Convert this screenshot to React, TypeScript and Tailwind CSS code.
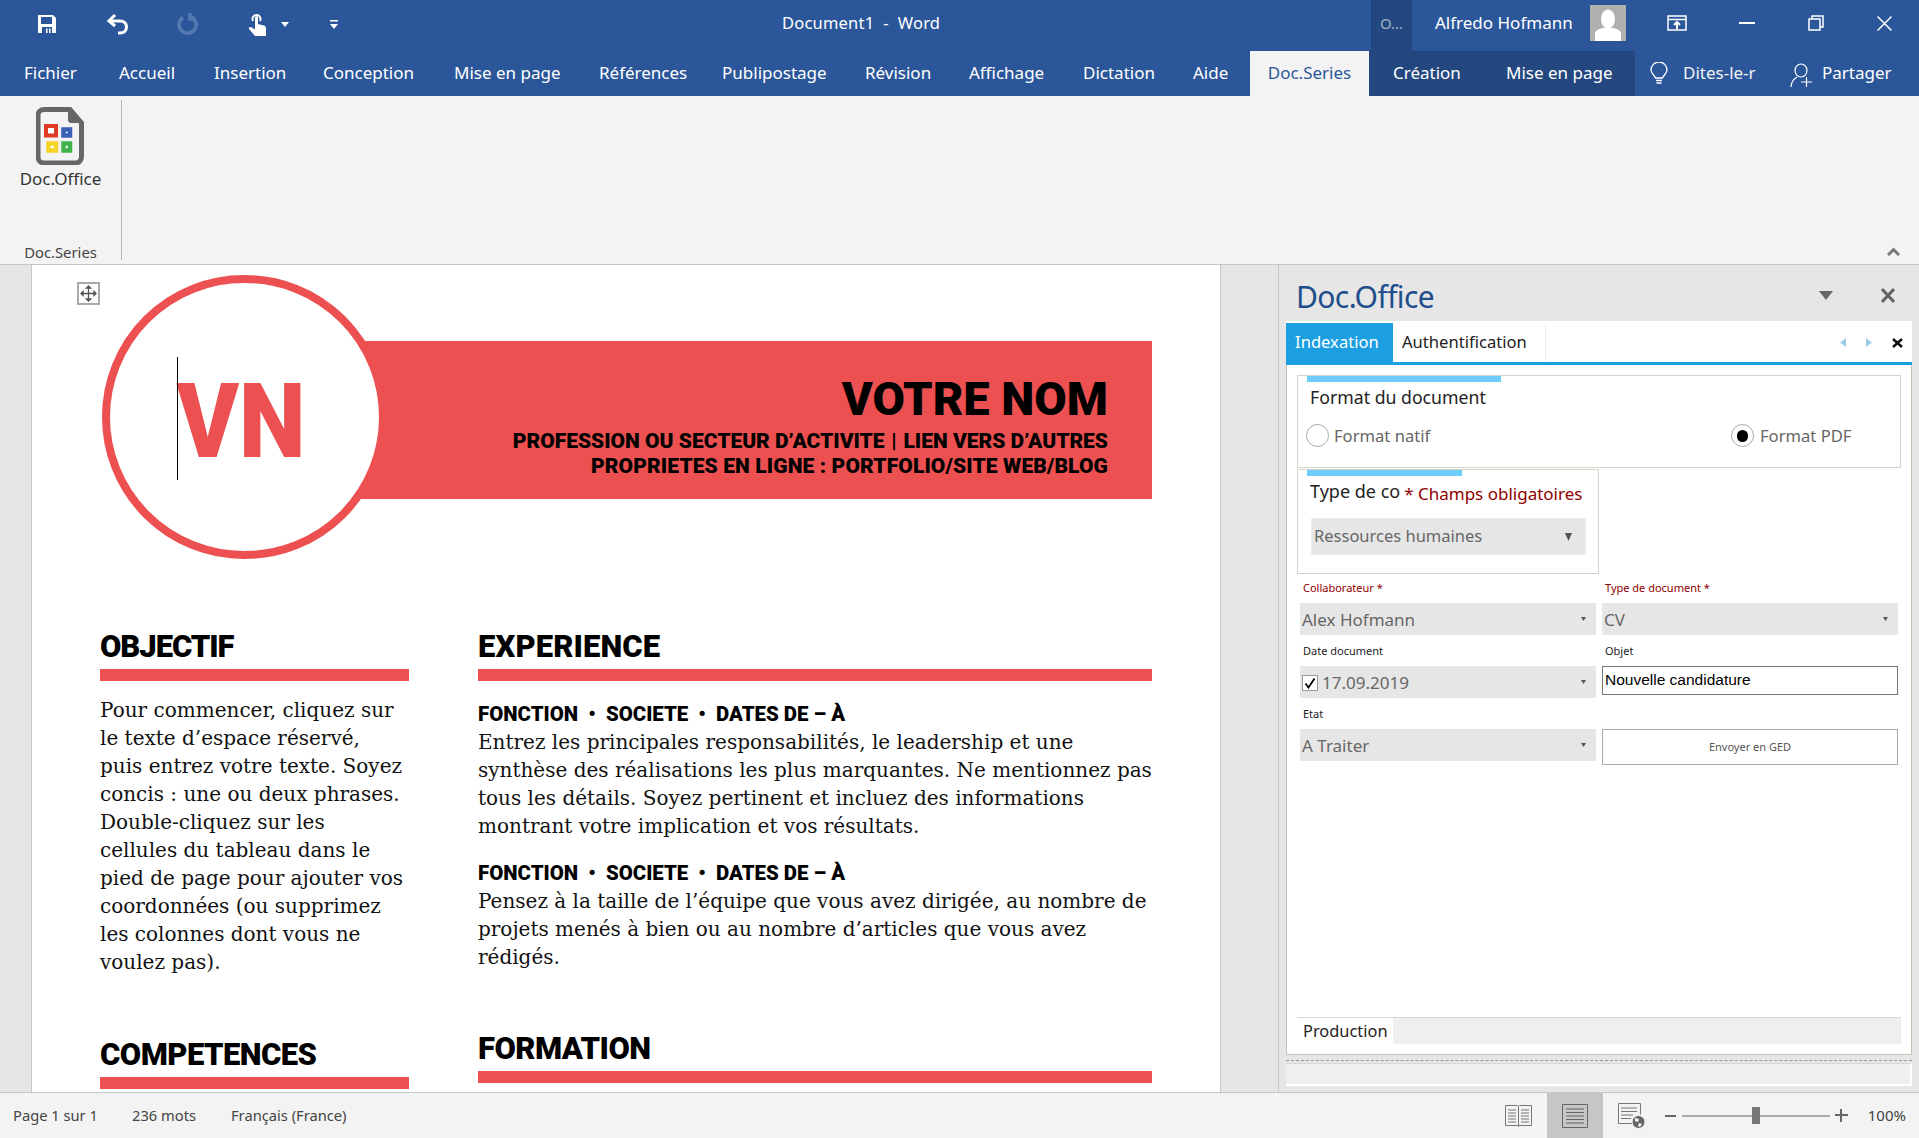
import { ReactElement, ReactNode } from "react";

const ui = "font-['Noto_Sans','Open_Sans',sans-serif]";
const slab = "font-['DejaVu_Serif',serif]";
const heavy = "font-['Roboto',sans-serif] font-black";

const leftTabs = [
  { label: "Fichier", cls: "w-[95px] pl-[24px]" },
  { label: "Accueil", cls: "w-[95px] pl-[24px]" },
  { label: "Insertion", cls: "w-[109px] pl-[24px]" },
  { label: "Conception", cls: "w-[131px] pl-[24px]" },
  { label: "Mise en page", cls: "w-[145px] pl-[24px]" },
  { label: "Références", cls: "w-[123px] pl-[24px]" },
  { label: "Publipostage", cls: "w-[143px] pl-[24px]" },
  { label: "Révision", cls: "w-[104px] pl-[24px]" },
  { label: "Affichage", cls: "w-[114px] pl-[24px]" },
  { label: "Dictation", cls: "w-[110px] pl-[24px]" },
  { label: "Aide", cls: "w-[57px] pl-[24px]" },
];

function TitleBar(): ReactElement {
  return (
    <div className="relative flex h-[51px] shrink-0 items-center bg-[#2b579a] text-white">
      <div className="flex w-[1371px] items-center pb-[3px]">
        <svg className="ml-[37px] h-[20px] w-[20px]" viewBox="0 0 20 20">
          <path fill="#fff" d="M1 1h15l3 3v15H1z" />
          <path fill="#2b579a" d="M4 3h11v7H4zM5 13h10v6H5z" />
          <path fill="#fff" d="M9 14.5h1.5V19H9zM12 14.5h1.5V19H12z" />
          <path fill="#fff" d="M4 10h11v1H4z" />
        </svg>
        <svg className="ml-[49px] h-[22px] w-[24px]" viewBox="0 0 24 22" fill="none" stroke="#fff" strokeWidth="3">
          <path d="M9 2 3 8l6 5" />
          <path d="M3.500 8H14c4 0 6.500 2.500 6.500 6s-2.500 6-6.500 6h-2" />
        </svg>
        <svg className="ml-[47px] h-[22px] w-[22px]" viewBox="0 0 22 22" fill="none" stroke="#5479b0" strokeWidth="3.500">
          <path d="M13 3.500a8.500 8.500 0 1 1-7 1" />
          <path d="M13 0v8" />
        </svg>
        <svg className="ml-[49px] h-[24px] w-[20px]" viewBox="0 0 20 24">
          <path fill="none" stroke="#fff" strokeWidth="2" d="M5 9a4 4 0 1 1 7 0" />
          <path fill="#fff" d="M7 5.500a1.500 1.500 0 0 1 3 0V12l6 1.500c1.500.5 2 1.500 2 3V24H7l-6-7c-.5-1 .5-2.500 2-2l4 2.500z" />
        </svg>
        <svg className="ml-[13px] h-[5px] w-[8px]" viewBox="0 0 8 5">
          <path fill="#fff" d="M0 0h8L4 5z" />
        </svg>
        <svg className="ml-[41px] h-[9px] w-[8px]" viewBox="0 0 8 9">
          <path fill="#fff" d="M0 0h8v1.500H0zM0 4h8L4 9z" />
        </svg>
      </div>
      <div className={`${ui} absolute left-[782px] top-[13px] text-[16.500px] leading-[20px] tracking-[0.2px]`}>
        Document1&nbsp; -&nbsp; Word
      </div>
      <div className="flex h-full w-[41px] items-center justify-center bg-[#24477f] pb-[4px]">
        <span className={`${ui} text-[15px] text-[#9fb1cc]`}>O...</span>
      </div>
      <span className={`${ui} mb-[5px] ml-[23px] w-[155px] text-[17px]`}>Alfredo Hofmann</span>
      <div className="mb-[5px] flex h-[36px] w-[36px] items-end justify-center overflow-hidden bg-[#b0b0b0]">
        <svg className="h-[32px] w-[30px]" viewBox="0 0 30 32">
          <ellipse cx="15" cy="10" fill="#fff" rx="7" ry="9.500" />
          <path fill="#fff" d="M2 32v-7c0-3 3-5 8-6h10c5 1 8 3 8 6v7z" />
        </svg>
      </div>
      <div className="flex items-center pb-[5px]">
        <svg className="ml-[41px] h-[16px] w-[20px]" viewBox="0 0 20 16" fill="none" stroke="#fff" strokeWidth="1.500">
          <path d="M1 1h18v14H1zM1 4.500h18" />
          <path d="M10 14V7.500M7 10 10 7l3 3" strokeWidth="2" />
        </svg>
        <svg className="ml-[52px] h-[2px] w-[16px]" viewBox="0 0 16 2">
          <path fill="#fff" d="M0 0h16v2H0z" />
        </svg>
        <svg className="ml-[53px] h-[16px] w-[16px]" viewBox="0 0 16 16" fill="none" stroke="#fff" strokeWidth="1.500">
          <path d="M1 4h11v11H1zM4 4V1h11v11h-3" />
        </svg>
        <svg className="ml-[53px] h-[15px] w-[15px]" viewBox="0 0 15 15" fill="none" stroke="#fff" strokeWidth="1.500">
          <path d="m.5.5 14 14M14.500.5l-14 14" />
        </svg>
      </div>
    </div>
  );
}

function TabBar(): ReactElement {
  return (
    <div className={`${ui} flex h-[45px] shrink-0 items-stretch bg-[#2b579a] text-[17px] leading-[43px] text-white`}>
      {leftTabs.map((t) => (
        <div key={t.label} className={`${t.cls} shrink-0 whitespace-nowrap`}>
          {t.label}
        </div>
      ))}
      <div className="ml-[24px] w-[119px] shrink-0 bg-[#f3f3f3] text-center text-[#2b579a]">Doc.Series</div>
      <div className="flex w-[266px] shrink-0 bg-[#24477f]">
        <span className="w-[137px] pl-[24px]">Création</span>
        <span>Mise en page</span>
      </div>
      <svg className="ml-[15px] mt-[11px] h-[23px] w-[18px]" viewBox="0 0 18 23" fill="none" stroke="#fff" strokeWidth="1.300">
        <path d="M5.500 16C4.500 13 1 11.500 1 8a8 8 0 0 1 16 0c0 3.500-3.500 5-4.500 8z" />
        <path d="M6 18.500h6M6.500 21h5" />
      </svg>
      <span className="ml-[15px] w-[107px] text-[#f2f2f2]">Dites-le-r</span>
      <svg className="mt-[12px] h-[24px] w-[23px]" viewBox="0 0 23 24" fill="none" stroke="#fff" strokeWidth="1.200">
        <ellipse cx="11" cy="7.500" rx="6" ry="6.500" />
        <path d="M1 24c0-5 3-8 6-10M11 19h11M16.500 14v10" />
      </svg>
      <span className="ml-[9px]">Partager</span>
    </div>
  );
}

function Ribbon(): ReactElement {
  return (
    <div className="flex h-[169px] shrink-0 border-b border-[#c6c6c6] bg-[#f3f3f3]">
      <div className="flex w-[121px] flex-col items-center">
        <svg className="ml-[-2px] mt-[11px] h-[58px] w-[48px]" viewBox="0 0 48 58">
          <path fill="#f3f3f3" stroke="#666" strokeWidth="5" d="M8 2.500h26l11.500 13.500v34a6 6 0 0 1-6 6H8a6 6 0 0 1-6-6V8a6 6 0 0 1 6-5.500z" />
          <path fill="#666" d="m32 2 14 14-12 0-2-2z" />
          <path fill="#fff" stroke="#df3b26" strokeWidth="4" d="M10 19h10v9.500H10z" />
          <path fill="#fff" stroke="#3b5fb5" strokeWidth="4.500" d="M27.500 22.500h6.500v6H27.500z" />
          <path fill="#fff" stroke="#f5d327" strokeWidth="4.500" d="M12.500 36.500h7.500v7H12.500z" />
          <path fill="#fff" stroke="#3fb34a" strokeWidth="4.500" d="M27.500 36.500h6.500v7H27.500z" />
        </svg>
        <span className={`${ui} mt-[4px] text-[17px] leading-[20px] text-[#333]`}>Doc.Office</span>
        <span className={`${ui} mt-[54px] text-[14.800px] leading-[18px] text-[#444]`}>Doc.Series</span>
      </div>
      <div className="mt-[4px] h-[160px] w-px bg-[#b8b8b8]" />
      <div className="flex flex-1 items-end justify-end pb-[8px] pr-[19px]">
        <svg className="h-[9px] w-[13px]" viewBox="0 0 13 9" fill="none" stroke="#777" strokeWidth="3">
          <path d="m1 8 5.500-5.500L12 8" />
        </svg>
      </div>
    </div>
  );
}

function SectionHead({ children, track }: { children: ReactNode; track: string }): ReactElement {
  return (
    <div>
      <div className={`${heavy} ${track} h-[39px] text-[31px] leading-[34px] text-black`}>{children}</div>
      <div className="h-[12px] bg-[#ec5050]" />
    </div>
  );
}

function Lines({ lines }: { lines: string[] }): ReactElement {
  return (
    <div className={`${slab} text-[20px] leading-[28px] text-[#111]`}>
      {lines.map((l) => (
        <div key={l} className="whitespace-nowrap">
          {l}
        </div>
      ))}
    </div>
  );
}

function JobTitle(): ReactElement {
  return (
    <div className={`${heavy} whitespace-nowrap text-[20.400px] leading-[28px] text-black`}>
      FONCTION&nbsp; •&nbsp; SOCIETE&nbsp; •&nbsp; DATES DE – À
    </div>
  );
}

function DocPage(): ReactElement {
  return (
    <div className="relative ml-[31px] w-[1190px] shrink-0 overflow-hidden border-x border-[#c6c6c6] bg-white">
      <div className="absolute left-[45px] top-[17px] flex h-[23px] w-[23px] items-center justify-center border-2 border-[#aaa] bg-white">
        <svg className="h-[17px] w-[17px]" viewBox="0 0 17 17" fill="none" stroke="#555" strokeWidth="1.300">
          <path d="M8.500 1v15M1 8.500h15" />
          <path fill="#555" d="m8.500 1 2 2h-4zM8.500 16l2-2h-4zM1 8.500l2-2v4zM16 8.500l-2-2v4z" />
        </svg>
      </div>

      <div className="ml-[290px] mt-[76px] flex h-[158px] w-[830px] flex-col items-end bg-[#ec5050] pr-[44px] pt-[30px] text-black">
        <div className={`${heavy} text-[47px] leading-[56px]`}>VOTRE NOM</div>
        <div className={`${heavy} mt-[2px] text-right text-[21px] leading-[25px]`}>
          <div>
            PROFESSION OU SECTEUR D’ACTIVITE <span className="px-[1.500px]">|</span> LIEN VERS D’AUTRES
          </div>
          <div className="tracking-[0.12px]">PROPRIETES EN LIGNE : PORTFOLIO/SITE WEB/BLOG</div>
        </div>
      </div>
      <div className="absolute left-[70px] top-[10px] flex h-[284px] w-[285px] items-center justify-center rounded-full border-[8px] border-[#ec5050] bg-white">
        <span className={`${heavy} mr-[7px] mt-[9px] inline-block scale-x-[0.91] text-[104px] leading-none text-[#ec5050]`}>VN</span>
      </div>
      <div className="absolute left-[145px] top-[92px] h-[123px] w-px bg-black" />

      <div className="ml-[68px] mt-[131px] grid grid-cols-[309px_674px] gap-x-[69px]">
        <div>
          <SectionHead track="tracking-[-1.070px]">OBJECTIF</SectionHead>
          <div className="mt-[15px]">
            <Lines
              lines={[
                "Pour commencer, cliquez sur",
                "le texte d’espace réservé,",
                "puis entrez votre texte. Soyez",
                "concis : une ou deux phrases.",
                "Double-cliquez sur les",
                "cellules du tableau dans le",
                "pied de page pour ajouter vos",
                "coordonnées (ou supprimez",
                "les colonnes dont vous ne",
                "voulez pas).",
              ]}
            />
          </div>
          <div className="mt-[62px]">
            <SectionHead track="tracking-[-0.550px]">COMPETENCES</SectionHead>
          </div>
        </div>
        <div>
          <SectionHead track="tracking-[0.120px]">EXPERIENCE</SectionHead>
          <div className="mt-[19px]">
            <JobTitle />
            <Lines
              lines={[
                "Entrez les principales responsabilités, le leadership et une",
                "synthèse des réalisations les plus marquantes. Ne mentionnez pas",
                "tous les détails. Soyez pertinent et incluez des informations",
                "montrant votre implication et vos résultats.",
              ]}
            />
          </div>
          <div className="mt-[19px]">
            <JobTitle />
            <Lines
              lines={[
                "Pensez à la taille de l’équipe que vous avez dirigée, au nombre de",
                "projets menés à bien ou au nombre d’articles que vous avez",
                "rédigés.",
              ]}
            />
          </div>
          <div className="mt-[61px]">
            <SectionHead track="tracking-[-0.550px]">FORMATION</SectionHead>
          </div>
        </div>
      </div>
    </div>
  );
}

function Caret({ big }: { big?: boolean }): ReactElement {
  return big ? (
    <svg className="h-[8px] w-[7px]" viewBox="0 0 7 8">
      <path fill="#555" d="M0 0h7L3.500 8z" />
    </svg>
  ) : (
    <svg className="h-[4px] w-[5px]" viewBox="0 0 5 4">
      <path fill="#555" d="M0 0h5L2.500 4z" />
    </svg>
  );
}

function Combo({ children }: { children: ReactNode }): ReactElement {
  return (
    <div className="flex h-[32px] items-center justify-between bg-[#e6e6e6] pl-[2px] pr-[10px] text-[17px] text-[#666]">
      <div className="mt-[2px] flex items-center">{children}</div>
      <Caret />
    </div>
  );
}

function FieldLabel({ text, red }: { text: string; red?: boolean }): ReactElement {
  return (
    <div className={`h-[16px] pl-[3px] text-[11px] leading-[16px] ${red ? "text-[#8f0000]" : "text-[#222]"}`}>
      {text}
    </div>
  );
}

function Radio({ on }: { on?: boolean }): ReactElement {
  return (
    <div className="flex h-[23px] w-[23px] items-center justify-center rounded-full border border-[#aaa] bg-white">
      {on && <div className="h-[12px] w-[11px] rounded-full bg-black" />}
    </div>
  );
}

function SidePanel(): ReactElement {
  return (
    <div className={`${ui} ml-[57px] flex flex-1 flex-col border-l border-[#c6c6c6] bg-[#e6e6e6]`}>
      <div className="flex h-[56px] shrink-0 items-center justify-between pl-[17px] pr-[24px] pt-[4px]">
        <span className="mt-[4px] text-[30px] leading-[40px] tracking-[-0.6px] text-[#1f4e8c]">Doc.Office</span>
        <div className="flex items-center">
          <svg className="mr-[48px] h-[9px] w-[14px]" viewBox="0 0 14 9">
            <path fill="#666" d="M0 0h14L7 9z" />
          </svg>
          <svg className="h-[15px] w-[14px]" viewBox="0 0 14 15" fill="none" stroke="#666" strokeWidth="3">
            <path d="m1 1 12 13M13 1 1 14" />
          </svg>
        </div>
      </div>

      <div className="mx-[7px] flex h-[734px] shrink-0 flex-col bg-white">
        <div className="flex h-[44px] shrink-0 items-stretch border-b-[3px] border-[#1b9fe0] pt-[2px] text-[16.600px] leading-[38px]">
          <div className="w-[107px] bg-[#1b9fe0] pl-[9px] text-white">Indexation</div>
          <div className="w-[153px] border-r border-[#eee] pl-[9px] text-[#222]">Authentification</div>
          <div className="flex flex-1 items-center justify-end pr-[9px]">
            <svg className="mr-[20px] h-[9px] w-[6px]" viewBox="0 0 6 9">
              <path fill="#9ccbe6" d="M6 0v9L0 4.500z" />
            </svg>
            <svg className="mr-[20px] h-[9px] w-[6px]" viewBox="0 0 6 9">
              <path fill="#9ccbe6" d="M0 0v9l6-4.500z" />
            </svg>
            <svg className="h-[10px] w-[11px]" viewBox="0 0 11 10" fill="none" stroke="#111" strokeWidth="2.500">
              <path d="m1 1 9 8M10 1 1 9" />
            </svg>
          </div>
        </div>

        <div className="flex flex-1 flex-col border-x border-b border-[#c4c4b4] pt-[10px]">
          <div className="relative ml-[10px] h-[93px] w-[604px] border border-[#d4d4c8] pl-[12px] pt-[9px]">
            <div className="absolute left-[9px] top-0 h-[6px] w-[194px] bg-[#6fcdfb]" />
            <div className="text-[17.700px] leading-[24px] text-[#222]">Format du document</div>
            <div className="mt-[14px] flex text-[16.600px] leading-[25px] text-[#666]">
              <div className="ml-[-4px] flex w-[425px] items-center">
                <Radio />
                <span className="ml-[5px]">Format natif</span>
              </div>
              <div className="flex items-center">
                <Radio on />
                <span className="ml-[6px]">Format PDF</span>
              </div>
            </div>
          </div>

          <div className="relative ml-[10px] mt-[1px] h-[105px] w-[302px] border border-[#d4d4c8] pl-[12px] pt-[6px]">
            <div className="absolute left-[9px] top-0 h-[6px] w-[155px] bg-[#6fcdfb]" />
            <div className="flex items-center whitespace-nowrap leading-[24px]">
              <span className="text-[18px] text-[#222]">Type de co</span>
              <span className="ml-[4px] mt-[6px] text-[17px] text-[#8f0000]">* Champs obligatoires</span>
            </div>
            <div className="ml-[1px] mt-[12px] flex h-[37px] w-[275px] items-center justify-between border border-[#eee] bg-[#e6e6e6] pl-[2px] pr-[13px] text-[16.500px] text-[#666]">
              <span>Ressources humaines</span>
              <Caret big />
            </div>
          </div>

          <div className="ml-[13px] mt-[6px] grid w-[598px] grid-cols-[296px_296px] gap-x-[6px]">
            <FieldLabel text="Collaborateur *" red />
            <FieldLabel text="Type de document *" red />
            <div className="mt-[7px]">
              <Combo>Alex Hofmann</Combo>
            </div>
            <div className="mt-[7px]">
              <Combo>CV</Combo>
            </div>
            <div className="mt-[8px]">
              <FieldLabel text="Date document" />
            </div>
            <div className="mt-[8px]">
              <FieldLabel text="Objet" />
            </div>
            <div className="mt-[7px]">
              <Combo>
                <div className="mr-[4px] flex h-[16px] w-[16px] items-center justify-center border border-[#999] bg-white">
                  <svg className="h-[12px] w-[12px]" viewBox="0 0 12 12" fill="none" stroke="#000" strokeWidth="1.800">
                    <path d="m1.500 6.500 3 4 6-9" />
                  </svg>
                </div>
                17.09.2019
              </Combo>
            </div>
            <div className="mt-[7px] flex h-[29px] items-center border border-[#777] pb-[1px] pl-[2px] font-['Liberation_Sans',sans-serif] text-[15.500px] text-black">
              Nouvelle candidature
            </div>
            <div className="mt-[8px]">
              <FieldLabel text="Etat" />
            </div>
            <div />
            <div className="mt-[7px]">
              <Combo>A Traiter</Combo>
            </div>
            <div className="mt-[7px] flex h-[36px] items-center justify-center border border-[#aaa] text-[11px] text-[#555]">
              Envoyer en GED
            </div>
          </div>

          <div className="mb-[10px] ml-[10px] mt-auto flex h-[27px] w-[604px] border-t border-[#d8d8d8] bg-[#efefef]">
            <div className="w-[96px] bg-white pl-[6px] text-[16.400px] leading-[26px] text-[#222]">Production</div>
          </div>
        </div>
      </div>

      <div className="mx-[7px] mt-[5px] h-px shrink-0 border-t border-dashed border-[#999]" />
      <div className="mx-[7px] mt-[2px] h-[23px] shrink-0 border-b-2 border-r-2 border-t border-b-white border-r-white border-t-[#d8d8d8] bg-[#efefef]" />
    </div>
  );
}

function StatusBar(): ReactElement {
  return (
    <div className={`${ui} flex h-[46px] shrink-0 items-center border-t border-[#c6c6c6] bg-[#f3f3f3] text-[14.700px] text-[#444]`}>
      <span className="ml-[13px] w-[119px]">Page 1 sur 1</span>
      <span className="w-[99px]">236 mots</span>
      <span>Français (France)</span>
      <div className="ml-auto flex h-full items-center">
        <svg className="h-[24px] w-[27px]" viewBox="0 0 27 24" fill="none" stroke="#777" strokeWidth="1">
          <path d="M.5 1.500h12l1 1 1-1h12v20h-12l-1 1-1-1H.5zM13.500 2v21" />
          <path d="M3 6h8M3 9h8M3 12h8M3 15h8M3 18h8M16 6h8M16 9h8M16 12h8M16 15h8M16 18h8" />
        </svg>
        <div className="ml-[15px] flex h-full w-[56px] items-center justify-center bg-[#c6c6c6]">
          <svg className="h-[24px] w-[26px]" viewBox="0 0 26 24" fill="none" stroke="#666" strokeWidth="1">
            <path d="M.5.500h25v23H.5z" />
            <path d="M4 5h18M4 8.500h18M4 12h18M4 15.500h18M4 19h18" />
          </svg>
        </div>
        <svg className="ml-[15px] h-[26px] w-[27px]" viewBox="0 0 27 26" fill="none" stroke="#777" strokeWidth="1">
          <path d="M16 20.500H.5V.500h22v11" />
          <path d="M3 5h16M3 8.500h16M3 12h12M3 15.500h10" />
          <circle cx="20.500" cy="19" r="6.500" fill="#666" stroke="#f3f3f3" />
          <path fill="#f3f3f3" stroke="none" d="M17 15l4 1-1 3-3-1zM21 20l3 1-2 3-2-1z" />
        </svg>
        <div className="ml-[20px] h-[2px] w-[11px] bg-[#666]" />
        <div className="relative ml-[6px] h-[2px] w-[148px] bg-[#aaa]">
          <div className="absolute left-[70px] top-[-8px] h-[17px] w-[8px] bg-[#777]" />
        </div>
        <div className="relative ml-[5px] h-[13px] w-[13px]">
          <div className="absolute left-0 top-[5px] h-[2px] w-[13px] bg-[#666]" />
          <div className="absolute left-[5px] top-0 h-[13px] w-[2px] bg-[#666]" />
        </div>
        <span className="ml-[20px] mr-[13px] text-[15px]">100%</span>
      </div>
    </div>
  );
}

export default function App(): ReactElement {
  return (
    <div className="flex h-[1138px] w-[1919px] flex-col overflow-hidden">
      <TitleBar />
      <TabBar />
      <Ribbon />
      <div className="flex min-h-0 flex-1 bg-[#e6e6e6]">
        <DocPage />
        <SidePanel />
      </div>
      <StatusBar />
    </div>
  );
}
